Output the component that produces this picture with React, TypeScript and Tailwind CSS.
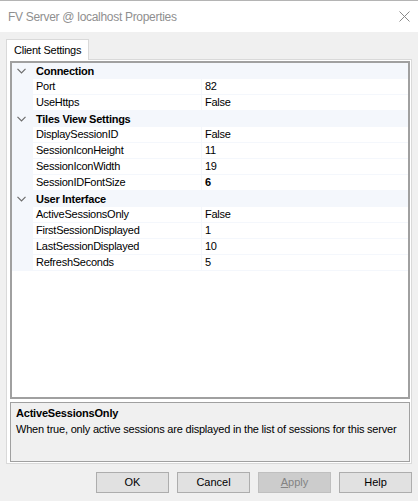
type Prop = { name: string; value: string; bold?: boolean };
type Category = { title: string; props: Prop[] };

const categories: Category[] = [
  {
    title: 'Connection',
    props: [
      { name: 'Port', value: '82' },
      { name: 'UseHttps', value: 'False' },
    ],
  },
  {
    title: 'Tiles View Settings',
    props: [
      { name: 'DisplaySessionID', value: 'False' },
      { name: 'SessionIconHeight', value: '11' },
      { name: 'SessionIconWidth', value: '19' },
      { name: 'SessionIDFontSize', value: '6', bold: true },
    ],
  },
  {
    title: 'User Interface',
    props: [
      { name: 'ActiveSessionsOnly', value: 'False' },
      { name: 'FirstSessionDisplayed', value: '1' },
      { name: 'LastSessionDisplayed', value: '10' },
      { name: 'RefreshSeconds', value: '5' },
    ],
  },
];

function Chevron() {
  return (
    <svg width="9" height="6" viewBox="0 0 9 6" className="ml-[5px]">
      <path d="M0.5 0.8 L4.5 4.8 L8.5 0.8" fill="none" stroke="#6d6d6d" strokeWidth="1.2" />
    </svg>
  );
}

function Button({ label, disabled }: { label: React.ReactNode; disabled?: boolean }) {
  return (
    <div
      className={
        disabled
          ? 'flex h-[21px] w-[73px] items-center justify-center border border-[#bfbfbf] bg-[#cccccc] text-[#838383]'
          : 'flex h-[21px] w-[73px] items-center justify-center border border-[#adadad] bg-[#e1e1e1] text-black'
      }
    >
      {label}
    </div>
  );
}

export default function App() {
  return (
    <div className="flex h-[501px] w-[418px] flex-col border-t border-[#b4b4b4] bg-[#f0f0f0] font-['Liberation_Sans',Arial,sans-serif] text-[11px] text-black">
      <div className="flex h-[31px] items-center justify-between bg-white pl-2 pr-[8px]">
        <span className="text-[12px] tracking-[-0.3px] text-[#8f8f8f]">FV Server @ localhost Properties</span>
        <svg width="11" height="11" viewBox="0 0 11 11">
          <path d="M0.5 0.5 L10.5 10.5 M10.5 0.5 L0.5 10.5" stroke="#8a8a8a" strokeWidth="1" />
        </svg>
      </div>

      <div className="px-[6px] pt-[7px]">
        <div className="relative z-10 -mb-px flex h-[21px] w-[83px] items-center border border-b-0 border-[#d9d9d9] bg-white pl-[7px] tracking-[-0.25px]">
          Client Settings
        </div>
        <div className="flex h-[405px] w-[406px] flex-col gap-[3px] border border-[#d9d9d9] bg-white pb-px pl-[3px] pr-px pt-px">
          <div className="flex h-[338px] w-[400px] flex-col border-2 border-[#a0a0a0] bg-white tracking-[-0.25px]">
            {categories.map((cat) => (
              <div key={cat.title}>
                <div className="flex h-4 items-center bg-[#f4f7fc]">
                  <Chevron />
                  <span className="ml-[10px] font-bold">{cat.title}</span>
                </div>
                {cat.props.map((p) => (
                  <div key={p.name} className="flex h-4 bg-[#f4f7fc]">
                    <div className="w-[21px]" />
                    <div className="flex h-[15px] w-[168px] items-center bg-white pl-[3px]">{p.name}</div>
                    <div
                      className={
                        p.bold
                          ? 'ml-px flex h-[15px] flex-1 items-center bg-white pl-[3px] font-bold'
                          : 'ml-px flex h-[15px] flex-1 items-center bg-white pl-[3px]'
                      }
                    >
                      {p.value}
                    </div>
                  </div>
                ))}
              </div>
            ))}
          </div>
          <div className="h-[60px] w-[400px] border border-[#a0a0a0] bg-[#f0f0f0] pl-[5px] pt-[2px] tracking-[-0.2px]">
            <div className="font-bold leading-[16px]">ActiveSessionsOnly</div>
            <div className="leading-[16px]">
              When true, only active sessions are displayed in the list of sessions for this server
            </div>
          </div>
        </div>

        <div className="mt-[8px] flex justify-end gap-[8px]">
          <Button label="OK" />
          <Button label="Cancel" />
          <Button
            disabled
            label={
              <span>
                <span className="underline">A</span>pply
              </span>
            }
          />
          <Button label="Help" />
        </div>
      </div>
    </div>
  );
}
